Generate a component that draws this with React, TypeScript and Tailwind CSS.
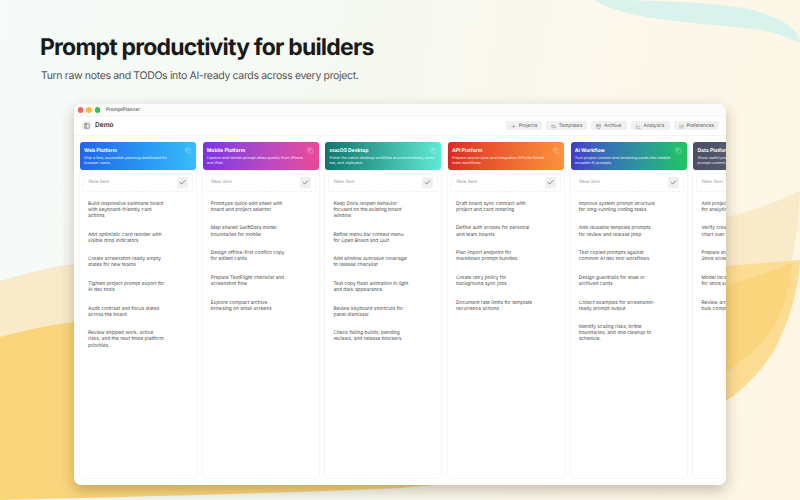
import { Archive, Check, ChartLine, Copy, List, PanelLeft, Plus, Repeat2 } from 'lucide-react';

const boards = [
  {
    title: 'Web Platform',
    desc: 'Ship a fast, accessible planning dashboard for\nbrowser users.',
    header: 'from-[#2563eb] to-[#38bdf8]',
    items: [
      'Build responsive swimlane board\nwith keyboard-friendly card\nactions',
      'Add optimistic card reorder with\nvisible drop indicators',
      'Create screenshot-ready empty\nstates for new teams',
      'Tighten project prompt export for\nAI dev tools',
      'Audit contrast and focus states\nacross the board',
      'Review shipped work, active\nrisks, and the next three platform\npriorities.',
    ],
  },
  {
    title: 'Mobile Platform',
    desc: 'Capture and review prompt ideas quickly from iPhone\nand iPad.',
    header: 'from-[#7c2fe6] to-[#ec4899]',
    items: [
      'Prototype quick-add sheet with\nboard and project selector',
      'Map shared SwiftData model\nboundaries for mobile',
      'Design offline-first conflict copy\nfor edited cards',
      'Prepare TestFlight checklist and\nscreenshot flow',
      'Explore compact archive\nbrowsing on small screens',
    ],
  },
  {
    title: 'macOS Desktop',
    desc: 'Polish the native desktop workflow around windows, menu\nbar, and clipboard.',
    header: 'from-[#0f766e] to-[#5eead4]',
    items: [
      'Keep Dock reopen behavior\nfocused on the existing board\nwindow',
      'Refine menu bar context menu\nfor Open Board and Quit',
      'Add window autosave coverage\nto release checklist',
      'Test copy flash animation in light\nand dark appearance',
      'Review keyboard shortcuts for\npanel dismissal',
      'Check failing builds, pending\nreviews, and release blockers.',
    ],
  },
  {
    title: 'API Platform',
    desc: 'Prepare secure sync and integration APIs for future\nteam workflows.',
    header: 'from-[#dc2626] to-[#fb923c]',
    items: [
      'Draft board sync contract with\nproject and card ordering',
      'Define auth scopes for personal\nand team boards',
      'Plan import endpoint for\nmarkdown prompt bundles',
      'Create retry policy for\nbackground sync jobs',
      'Document rate limits for template\nrecurrence actions',
    ],
  },
  {
    title: 'AI Workflow',
    desc: 'Turn project context and remaining cards into reliable\nreusable AI prompts.',
    header: 'from-[#4338ca] to-[#22c55e]',
    items: [
      'Improve system prompt structure\nfor long-running coding tasks',
      'Add reusable template prompts\nfor review and release prep',
      'Test copied prompts against\ncommon AI dev tool workflows',
      'Design guardrails for stale or\narchived cards',
      'Collect examples for screenshot-\nready prompt output',
      'Identify scaling risks, brittle\nboundaries, and one cleanup to\nschedule.',
    ],
  },
  {
    title: 'Data Platform',
    desc: 'Show useful project trends and\nprompt content.',
    header: 'from-[#4b4f66] to-[#6b7280]',
    items: [
      'Add project filters\nfor analytics views',
      'Verify created cards\nchart over time',
      'Prepare stats for App\nStore screenshots',
      'Model local events\nfor store summaries',
      'Review archive data\nbulk completion',
    ],
  },
];

const actions = [
  { label: 'Projects', icon: Plus, width: 'w-[36px]' },
  { label: 'Templates', icon: Repeat2, width: 'w-[41px]' },
  { label: 'Archive', icon: Archive, width: 'w-[35.5px]' },
  { label: 'Analytics', icon: ChartLine, width: 'w-[39px]' },
  { label: 'Preferences', icon: List, width: 'w-[45.5px]' },
];

function Backdrop() {
  return (
    <svg className="absolute inset-0" width="800" height="500" viewBox="0 0 800 500">
      <path d="M595 0 L627 0 C660 1 705 2 743 8 C770 13 795 24 800 40 L800 43 C785 36 775 33 760 30 C725 25 660 22 627 13 C612 9 600 4 595 0 Z" fill="#d9f3ec" />
      <path d="M0 281 C30 272 55 266 74 264 C300 250 560 245 727 217 C755 211 780 200 800 191 C799 220 797 240 790 266 L727 400 L0 400 Z" fill="#f9eaca" />
      <path d="M800 260 C799 285 790 325 770 357 C755 378 740 392 727 400 L400 480 L300 300 Z" fill="#fcdc92" />
      <path d="M0 337 C30 329 55 324 74 322 C300 315 560 325 727 285 C750 279 775 270 792 263 C790 290 782 315 770 332 C755 352 740 362 727 372 C640 445 520 480 400 488 C260 494 120 497 0 500 Z" fill="#fad57c" />
    </svg>
  );
}

function Board({ board }: { board: (typeof boards)[number] }) {
  return (
    <div className="w-[116px] shrink-0 flex flex-col">
      <div className={`h-[27.5px] rounded-[3px] bg-linear-to-r ${board.header} pl-[4px] pt-[5.5px] text-white relative`}>
        <p className="text-[5px] leading-[7px] font-bold">{board.title}</p>
        <p className="mt-[1.5px] text-[3.8px] leading-[4.9px] whitespace-pre text-white/85">{board.desc}</p>
        <Copy className="absolute right-[5px] top-[4.5px] w-[6.5px] h-[7px] text-white/70" strokeWidth={1.6} />
      </div>
      <div className="flex-1 mt-[1px] rounded-b-[3px] bg-white shadow-[0_0_2px_rgba(0,0,0,0.14)] px-[3px] pt-[2.5px]">
        <div className="h-[19px] flex items-center justify-between pl-[4.5px] pr-[4px] border border-dashed border-[#f1f1f1] rounded-[2px]">
          <span className="mt-[1px] text-[4.7px] text-[#9a9a9a]">New item</span>
          <span className="w-[11px] h-[11px] rounded-[2px] bg-[#f0f0f0] flex items-center justify-center">
            <Check className="w-[7px] h-[7px] text-[#333]" strokeWidth={2} />
          </span>
        </div>
        <div className="mt-[8.8px] pl-[5px] flex flex-col gap-[12.5px]">
          {board.items.map((item) => (
            <p key={item} className="text-[4.85px] leading-[6.1px] whitespace-pre text-[#4a4a4a]">{item}</p>
          ))}
        </div>
      </div>
    </div>
  );
}

export default function App() {
  return (
    <div className="relative w-[800px] h-[500px] overflow-hidden bg-[linear-gradient(100deg,#f5fbf9_0%,#f5f9f2_40%,#fdf7ea_75%,#fdf6e4_100%)] font-['Inter',sans-serif] [text-rendering:geometricPrecision]">
      <Backdrop />
      <div className="relative pt-[31px]">
        <h1 className="pl-[40px] text-[23px] leading-[32px] font-bold tracking-[-0.8px] text-[#1a1a1a]">Prompt productivity for builders</h1>
        <p className="pl-[41px] mt-[5px] text-[10.5px] leading-[16px] tracking-[-0.34px] text-[#555]">Turn raw notes and TODOs into AI-ready cards across every project.</p>
        <div className="ml-[74px] mt-[20px] w-[652px] h-[381px] rounded-[7px] bg-white overflow-hidden flex flex-col shadow-[0_5px_14px_rgba(70,50,10,0.3)]">
          <div className="h-[12px] shrink-0 flex items-center gap-[3px] pl-[3.5px] bg-[#fbfbfb]">
            <span className="w-[5.5px] h-[5.5px] rounded-full bg-[#ff5f57]" />
            <span className="w-[5.5px] h-[5.5px] rounded-full bg-[#febc2e]" />
            <span className="w-[5.5px] h-[5.5px] rounded-full bg-[#28c840]" />
            <span className="ml-[3px] mt-[2px] text-[4.8px] font-medium text-[#555]">PromptPlanner</span>
          </div>
          <div className="h-[19.5px] shrink-0 flex items-center justify-between pl-[8px] pr-[7px] border-y border-[#f4f4f4]">
            <div className="flex items-center gap-[4px]">
              <span className="w-[9px] h-[9px] rounded-[2px] bg-[#f0f0f0] flex items-center justify-center">
                <PanelLeft className="w-[6px] h-[6px] text-[#444]" strokeWidth={2} />
              </span>
              <span className="mt-[1px] text-[6.6px] font-semibold text-[#333]">Demo</span>
            </div>
            <div className="flex gap-[4px]">
              {actions.map(({ label, icon: Icon, width }) => (
                <span key={label} className={`${width} h-[8.6px] pt-[1px] rounded-[2px] bg-[#f0f0f0] flex items-center justify-center gap-[3px] text-[4.8px] text-[#555]`}>
                  <Icon className="w-[5px] h-[5px]" strokeWidth={1.6} />
                  {label}
                </span>
              ))}
            </div>
          </div>
          <div className="flex-1 min-h-0 flex gap-[6.7px] pl-[6px] pt-[6.5px] pb-[7px]">
            {boards.map((board) => (
              <Board key={board.title} board={board} />
            ))}
          </div>
        </div>
      </div>
    </div>
  );
}
